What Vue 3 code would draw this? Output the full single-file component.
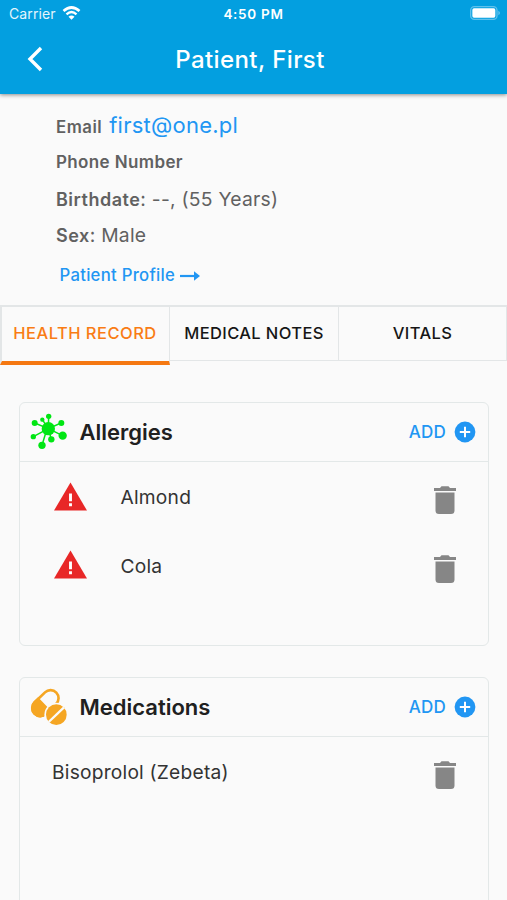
<script setup>
const info = [
  { label: 'Email', link: 'first@one.pl', key: 'email' },
  { label: 'Phone Number', key: 'phone' },
  { label: 'Birthdate', value: ': --, (55 Years)', key: 'birth' },
  { label: 'Sex', value: ': Male', key: 'sex' },
]
const tabs = ['HEALTH RECORD', 'MEDICAL NOTES', 'VITALS']
const sections = [
  { title: 'Allergies', kind: 'allergy', items: ['Almond', 'Cola'] },
  { title: 'Medications', kind: 'medication', items: ['Bisoprolol (Zebeta)'] },
]
</script>

<template>
  <div class="screen">
    <header class="top">
      <div class="status">
        <div class="carrier">
          <span>Carrier</span>
          <svg class="wifi" viewBox="0 0 54 42">
            <path d="M3 15Q27-6 51 15" fill="none" stroke="#fff" stroke-width="8" />
            <path d="M12 25Q27 11 42 25" fill="none" stroke="#fff" stroke-width="7" />
            <path d="M27 41L18 32Q27 25 36 32Z" fill="#fff" />
          </svg>
        </div>
        <span class="clock">4:50 PM</span>
        <svg class="battery" viewBox="0 0 90 42">
          <rect x="2" y="2" width="79" height="38" rx="11" fill="none" stroke="#5fc1ec" stroke-width="4" />
          <rect x="7" y="7" width="69" height="28" rx="5" fill="#fff" />
          <path d="M85 14Q90 17 90 21T85 28Z" fill="#5fc1ec" />
        </svg>
      </div>
      <div class="bar">
        <svg class="back" viewBox="0 0 16 26">
          <path d="M14 2L3 13L14 24" fill="none" stroke="#fff" stroke-width="3.4" />
        </svg>
        <h1>Patient, First</h1>
      </div>
    </header>

    <section class="info">
      <div v-for="row in info" :key="row.key" class="row" :class="row.key">
        <b>{{ row.label }}</b><span v-if="row.value">{{ row.value }}</span>
        <a v-if="row.link">{{ row.link }}</a>
      </div>
      <a class="profile">
        <span>Patient Profile</span>
        <svg viewBox="0 0 20 12">
          <path d="M0 6H15" stroke="#2196f3" stroke-width="2.2" />
          <path d="M14 1.2L20 6L14 10.8Z" fill="#2196f3" />
        </svg>
      </a>
    </section>

    <nav class="tabs">
      <div v-for="(tab, i) in tabs" :key="tab" class="tab" :class="{ active: i === 0 }"><span>{{ tab }}</span></div>
    </nav>

    <main>
      <section v-for="s in sections" :key="s.title" class="card" :class="s.kind">
        <div class="head">
          <svg v-if="s.kind === 'allergy'" class="icon" viewBox="60 54 114 114">
            <g stroke="#00e613" stroke-width="4.5">
              <path d="M115 101L116 63M115 101L97 74M115 101L74 84M115 101L153 84M115 101L70 125M111 101L96 151M115 101L124 133M115 101L158 122" />
            </g>
            <g fill="#00e613">
              <circle cx="115" cy="101" r="20" /><circle cx="116" cy="64" r="8" />
              <circle cx="97" cy="74" r="6.5" /><circle cx="74" cy="84" r="9" />
              <circle cx="154" cy="84" r="9" /><circle cx="70" cy="125" r="8" />
              <circle cx="96" cy="151" r="11" /><circle cx="124" cy="133" r="9.5" />
              <circle cx="158" cy="122" r="12.5" />
            </g>
          </svg>
          <svg v-else class="icon" viewBox="60 174 114 114">
            <g transform="rotate(-44 105.5 220)">
              <rect x="61" y="196" width="91" height="48" rx="24" fill="none" stroke="#f5a623" stroke-width="8" />
              <path d="M103 192H85A28 28 0 0 0 85 248H103Z" fill="#f5a623" />
            </g>
            <circle cx="139" cy="254" r="36" fill="#fafafa" />
            <circle cx="139" cy="254" r="31" fill="#f5a623" />
            <path d="M116 276L162 232" stroke="#fafafa" stroke-width="7" />
          </svg>
          <h2>{{ s.title }}</h2>
          <span class="add">ADD</span>
          <svg class="plus" viewBox="0 0 22 22">
            <circle cx="11" cy="11" r="10.400" fill="#2196f3" />
            <path d="M11 5.800V16.200M5.800 11H16.200" stroke="#fff" stroke-width="2" />
          </svg>
        </div>
        <div v-for="item in s.items" :key="item" class="item">
          <svg v-if="s.kind === 'allergy'" class="warn" viewBox="0 0 34 29">
            <path d="M17 0L34 29H0Z" fill="#e82727" />
            <path d="M15.500 11.500H18.500V19.500H15.500ZM15.500 21.500H18.500V24.500H15.500Z" fill="#fff" />
          </svg>
          <span class="name">{{ item }}</span>
          <svg class="trash" viewBox="0 0 22 28">
            <path d="M0 2H6L7.500 .3H14.500L16 2H22V5H0ZM1.500 6.600H20.500V24.500Q20.500 28 17 28H5Q1.500 28 1.500 24.500Z" fill="#868686" />
          </svg>
        </div>
      </section>
    </main>
  </div>
</template>

<style>
body { margin: 0; background: #fafafa; }
</style>
<style scoped>
* { box-sizing: border-box; }
.screen { width: 507px; height: 900px; overflow: hidden; display: flex; flex-direction: column; background: #fafafa; font-family: Inter, sans-serif; white-space: nowrap; }
svg { display: block; flex: none; }
h1, h2 { margin: 0; }
.top { height: 94px; flex: none; background: #039fe0; color: #fff; box-shadow: 0 1px 4px rgba(0, 0, 0, .45); }
.status { height: 27px; display: grid; grid-template-columns: 1fr auto 1fr; align-items: center; padding: 0 7px 0 9px; }
.carrier { display: flex; align-items: center; gap: 6px; font-size: 14px; letter-spacing: .1px; color: #e4f5fc; }
.wifi { width: 19px; height: 14px; margin-top: -2px; }
.clock { font-size: 13.500px; font-weight: 600; letter-spacing: .7px; margin-left: -2px; }
.battery { width: 30px; height: 14px; justify-self: end; margin-top: -1px; }
.bar { height: 67px; display: grid; grid-template-columns: 56px 1fr 63px; align-items: center; }
.back { width: 16px; height: 26px; margin: -3px 0 0 27px; }
h1 { font-size: 24px; font-weight: 500; letter-spacing: .4px; text-align: center; line-height: 28px; margin-top: -2px; }
.info { height: 211px; flex: none; padding: 13px 0 0 56px; color: #616161; }
.row { height: 36px; display: flex; align-items: baseline; line-height: 36px; font-size: 19.300px; letter-spacing: .25px; white-space: pre; }
.row b { font-size: 17px; font-weight: 600; letter-spacing: .37px; }
.row.email b { font-size: 16.800px; letter-spacing: .5px; }
.row.email a { font-size: 22px; margin-left: 7px; letter-spacing: .25px; }
.phone { line-height: 39px; }
.birth { height: 37px; line-height: 41px; }
.row.birth b, .row.sex b { font-size: 18px; letter-spacing: .5px; }
.sex { line-height: 39px; }
a { color: #2196f3; }
.profile { display: flex; align-items: center; gap: 5px; margin: 11px 0 0 3.500px; font-size: 16.700px; letter-spacing: .28px; line-height: 24px; font-weight: 500; }
.profile svg { width: 20px; height: 12px; margin-top: 2px; }
.tabs { height: 60px; flex: none; display: grid; grid-template-columns: 170px 169px 168px; }
.tab { height: 56px; display: flex; align-items: center; justify-content: center; font-size: 16.500px; font-weight: 500; color: #161616; border: solid #e3e6e7; border-width: 2px 1px 1px 0; letter-spacing: .38px; }
.tab span { margin: -2px 0 0 0; }
.active { height: 60px; color: #f97c14; border-left: 2px solid #e3e6e7; border-bottom: 4px solid #f57811; letter-spacing: .48px; }
.active span { margin-left: -1px; }
main { padding: 37px 18.500px 0 19px; display: flex; flex-direction: column; gap: 31px; }
.card { height: 244px; flex: none; border: 1.500px solid #e3e8e8; border-radius: 6px; }
.head { height: 59px; display: flex; align-items: center; border-bottom: 1.500px solid #e3e8e8; padding: 0 11.500px 0 10px; }
.icon { width: 38px; height: 38px; }
h2 { margin-left: 11.500px; font-size: 22px; font-weight: 600; color: #202020; flex: 1; }
.add { color: #2196f3; font-size: 17px; font-weight: 500; letter-spacing: .2px; }
.plus { width: 22px; height: 22px; margin-left: 8px; }
.item { height: 68.500px; display: flex; align-items: center; padding: 0 32px; }
.warn { width: 33px; height: 29px; margin: 0 33.500px 0 2px; }
.name { flex: 1; font-size: 19.200px; letter-spacing: .22px; color: #333; margin-top: 2px; }
.trash { width: 22px; height: 28px; margin-top: 8px; }
.medication { height: 300px; }
</style>
